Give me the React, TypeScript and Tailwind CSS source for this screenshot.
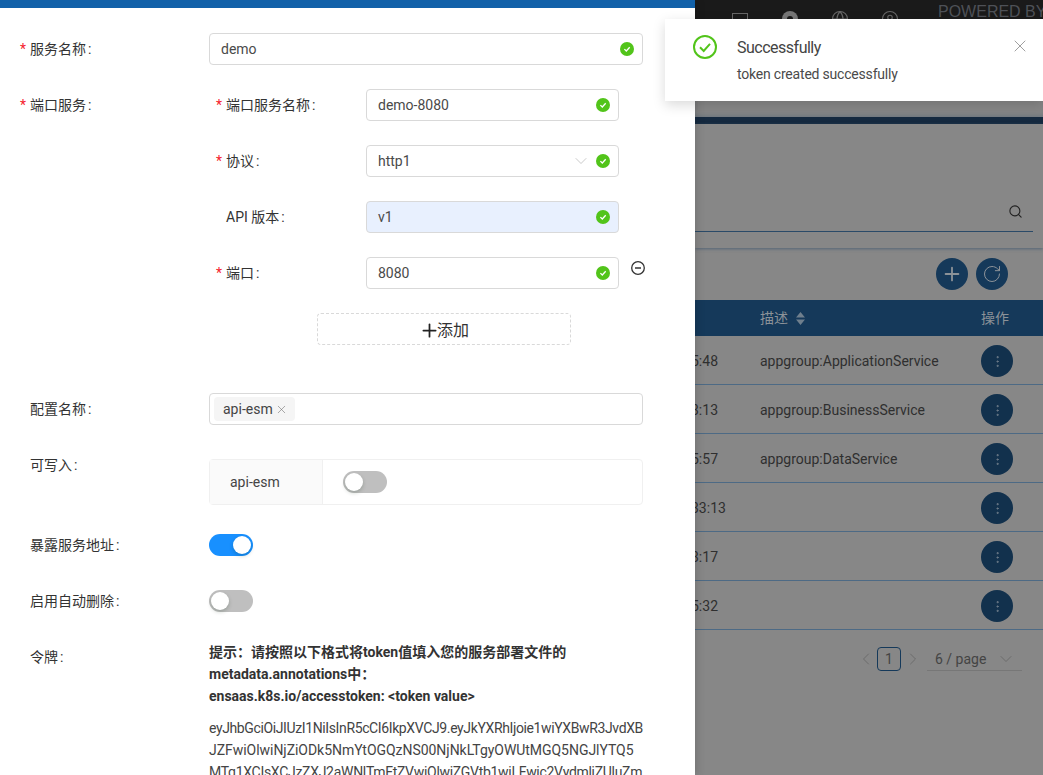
import { ReactNode } from "react";
import { ChevronDown, ChevronLeft, ChevronRight, CircleUser, EllipsisVertical, Globe, Plus, RotateCw, Search, X } from "lucide-react";

const tokenLines = [
  { text: "eyJhbGciOiJIUzI1NiIsInR5cCI6IkpXVCJ9.eyJkYXRhIjoie1wiYXBwR3JvdXB", tracking: "tracking-[-0.38px]" },
  { text: "JZFwiOlwiNjZiODk5NmYtOGQzNS00NjNkLTgyOWUtMGQ5NGJlYTQ5", tracking: "tracking-[-0.04px]" },
  { text: "MTg1XCIsXCJzZXJ2aWNlTmFtZVwiOlwiZGVtb1wiLFwic2VydmljZUluZm", tracking: "tracking-[-0.29px]" },
];

const tableRows = [
  { time: "5:48", desc: "appgroup:ApplicationService" },
  { time: "3:13", desc: "appgroup:BusinessService" },
  { time: "5:57", desc: "appgroup:DataService" },
  { time: "33:13", desc: "" },
  { time: "3:17", desc: "" },
  { time: "5:32", desc: "" },
];

function CheckBadge() {
  return (
    <svg width="14" height="14" viewBox="0 0 14 14" className="shrink-0">
      <circle cx="7" cy="7" r="7" fill="#52c41a" />
      <path d="M4.4 7.1 6.3 9 9.7 5.3" fill="none" stroke="#fff" strokeWidth="1.3" />
    </svg>
  );
}

function Field({ value, select, filled }: { value: string; select?: boolean; filled?: boolean }) {
  return (
    <div
      className={`flex h-8 w-full items-center rounded border border-[#d9d9d9] pl-[11px] pr-2 text-[#4a4a4a] ${
        filled ? "bg-[#e8f0fe]" : "bg-white"
      }`}
    >
      <span className="flex-1">{value}</span>
      {select ? <ChevronDown size={20} strokeWidth={1} className="mr-[5px] text-[#bfbfbf]" /> : null}
      <CheckBadge />
    </div>
  );
}

function Label({ text, required }: { text: string; required?: boolean }) {
  return (
    <div className="flex h-8 items-center text-[#333]">
      <span className="w-[10px] text-[#f5222d]">{required ? "*" : ""}</span>
      {text}
      <span className="ml-[2px]">:</span>
    </div>
  );
}

function Row({ label, required, children, className }: { label: string; required?: boolean; children: ReactNode; className?: string }) {
  return (
    <div className={`flex pl-5 ${className ?? "mb-6"}`}>
      <div className="w-[189px] shrink-0">
        <Label text={label} required={required} />
      </div>
      <div className="w-[434px]">{children}</div>
    </div>
  );
}

function SubRow({ label, required, children }: { label: string; required?: boolean; children: ReactNode }) {
  return (
    <div className="mb-6 flex pl-[7px]">
      <div className="w-[150px] shrink-0">
        <Label text={label} required={required} />
      </div>
      <div className="w-[253px]">{children}</div>
    </div>
  );
}

function Toggle({ on }: { on?: boolean }) {
  return (
    <div className={`flex h-[22px] w-11 items-center rounded-full px-[2px] ${on ? "justify-end bg-[#1890ff]" : "bg-[#bfbfbf]"}`}>
      <div className="h-[18px] w-[18px] rounded-full bg-white shadow-[0_2px_4px_rgba(0,35,11,0.2)]" />
    </div>
  );
}

function Drawer() {
  return (
    <div className="z-10 h-full w-[695px] shrink-0 overflow-hidden bg-white shadow-[2px_0_8px_rgba(0,0,0,0.15)]">
      <div className="h-2 bg-[#1261a9]" />
      <div className="pt-[25px]">
        <Row label="服务名称" required>
          <Field value="demo" />
        </Row>
        <Row label="端口服务" required className="mb-0">
          <SubRow label="端口服务名称" required>
            <Field value="demo-8080" />
          </SubRow>
          <SubRow label="协议" required>
            <Field value="http1" select />
          </SubRow>
          <SubRow label="API 版本">
            <Field value="v1" filled />
          </SubRow>
          <div className="relative">
            <SubRow label="端口" required>
              <Field value="8080" />
            </SubRow>
            <svg width="14" height="14" viewBox="0 0 14 14" fill="none" stroke="#333" className="absolute left-[422px] top-[4px]">
              <circle cx="7" cy="7" r="6.3" strokeWidth="1.3" />
              <path d="M4 7h6" strokeWidth="1.5" />
            </svg>
          </div>
          <div className="mb-12 ml-[108px] flex h-8 w-[254px] items-center justify-center rounded-sm border border-dashed border-[#d9d9d9] pt-[3px] text-base text-[#333]">
            <Plus size={21} strokeWidth={2} className="-mr-[3px] text-[#222]" />
            添加
          </div>
        </Row>
        <Row label="配置名称">
          <div className="flex h-8 items-center rounded border border-[#d9d9d9] px-1">
            <div className="flex h-6 w-[81px] items-center rounded-sm bg-[#f5f5f5] pl-[9px] text-[#444]">
              api-esm
              <X size={13} strokeWidth={1} className="ml-[2px] mt-px text-[#666]" />
            </div>
          </div>
        </Row>
        <Row label="可写入">
          <div className="mt-[10px] flex h-[46px] rounded-sm border border-[#f0f0f0]">
            <div className="flex w-[113px] items-center border-r border-[#f0f0f0] bg-[#fafafa] pl-5 text-[#444]">api-esm</div>
            <div className="flex items-center pl-5">
              <Toggle />
            </div>
          </div>
        </Row>
        <Row label="暴露服务地址">
          <div className="flex h-8 items-center">
            <Toggle on />
          </div>
        </Row>
        <Row label="启用自动删除">
          <div className="flex h-8 items-center">
            <Toggle />
          </div>
        </Row>
        <Row label="令牌" className="mb-0">
          <div className="font-bold leading-[22px] text-[#333]">
            <p>提示：请按照以下格式将token值填入您的服务部署文件的</p>
            <p>metadata.annotations中：</p>
            <p>ensaas.k8s.io/accesstoken: &lt;token value&gt;</p>
          </div>
          <div className="mt-[10px] leading-[22px] text-[#444]">
            {tokenLines.map((line) => (
              <p key={line.text} className={`whitespace-nowrap ${line.tracking}`}>
                {line.text}
              </p>
            ))}
          </div>
        </Row>
      </div>
    </div>
  );
}

function Backdrop() {
  return (
    <div className="flex h-full min-w-0 flex-1 flex-col overflow-hidden bg-[#878787] text-[#2f2f2f]">
      <div className="flex h-[60px] shrink-0 items-start bg-[#1a1a1a]">
        <div className="flex items-center gap-[34px] pl-[37px] pt-[11px] text-[#666]">
          <div className="h-3 w-4 border border-[#666]" />
          <div className="flex h-4 w-4 items-center justify-center rounded-full bg-[#777]">
            <div className="h-[6px] w-[6px] rounded-full bg-[#1a1a1a]" />
          </div>
          <div className="flex h-4 w-4 items-center justify-center">
            <Globe size={18} strokeWidth={1.5} className="shrink-0" />
          </div>
          <div className="flex h-4 w-4 items-center justify-center">
            <CircleUser size={18} strokeWidth={1.5} className="shrink-0" />
          </div>
        </div>
        <span className="ml-[40px] whitespace-nowrap pt-[2px] text-base leading-5 text-[#4e5157] [font-family:'Liberation_Sans',sans-serif]">POWERED BY</span>
      </div>
      <div className="h-[57px] shrink-0 shadow-[inset_0_-4px_4px_-2px_rgba(90,105,120,0.5)]" />
      <div className="h-[7px] shrink-0 bg-[#15293f]" />
      <div className="h-[124px] shrink-0 shadow-[0_1px_3px_rgba(60,85,110,0.7)]">
        <div className="mr-[10px] mt-[70px] flex h-[38px] items-center justify-end border-b border-[#2a4a68] pb-[3px] pr-[10px]">
          <Search size={15} strokeWidth={1.8} className="text-[#222]" />
        </div>
      </div>
      <div className="flex h-[52px] shrink-0 items-start justify-end gap-2 pr-[35px] pt-[10px]">
        <div className="flex h-8 w-8 items-center justify-center rounded-full bg-[#15395a] text-[#8c9298]">
          <Plus size={22} strokeWidth={2} />
        </div>
        <div className="flex h-8 w-8 items-center justify-center rounded-full bg-[#15395a] text-[#8c9298]">
          <RotateCw size={20} strokeWidth={1.2} />
        </div>
      </div>
      <div className="grid h-9 shrink-0 grid-cols-[65px_221px_62px] items-center bg-[#15395a] text-[#8c9298]">
        <div />
        <div className="flex items-center gap-2">
          描述
          <svg width="9" height="13" viewBox="0 0 9 13" fill="#6f7f8d">
            <path d="M4.5 0 9 5.5H0ZM0 7.5h9L4.5 13Z" />
          </svg>
        </div>
        <div>操作</div>
      </div>
      {tableRows.map((row) => (
        <div key={row.time} className="grid h-[49px] shrink-0 grid-cols-[65px_221px_62px] items-center border-b border-[#4d6a85] pt-[2px]">
          <div className="-ml-[4px] whitespace-nowrap">{row.time}</div>
          <div>{row.desc}</div>
          <div className="flex h-8 w-8 items-center justify-center rounded-full bg-[#12314d] text-[#7f8a94]">
            <EllipsisVertical size={15} strokeWidth={1.2} />
          </div>
        </div>
      ))}
      <div className="flex items-center pl-[161px] pt-[17px] text-[#444]">
        <ChevronLeft size={20} strokeWidth={1} className="text-[#666]" />
        <div className="ml-px flex h-6 w-6 items-center justify-center rounded-sm border border-[#15395a]">1</div>
        <ChevronRight size={20} strokeWidth={1} className="ml-[2px] text-[#666]" />
        <div className="ml-1 flex h-6 w-[95px] items-center border-b border-[#777] pl-2">
          6 / page
          <ChevronDown size={20} strokeWidth={1} className="ml-[10px] text-[#666]" />
        </div>
      </div>
    </div>
  );
}

export default function App() {
  return (
    <div className="relative flex h-[775px] w-[1043px] overflow-hidden text-sm [font-family:Roboto,'Noto_Sans_CJK_SC',sans-serif]">
      <Drawer />
      <Backdrop />
      <div className="absolute left-[665px] top-[19px] z-20 flex h-[82px] w-[378px] bg-white pl-7 pt-4 shadow-[0_4px_12px_rgba(0,0,0,0.15)]">
        <svg width="24" height="24" viewBox="0 0 24 24" fill="none" stroke="#52c41a" className="shrink-0">
          <circle cx="12" cy="12" r="11" strokeWidth="2" />
          <path d="M7 12.3 10.7 16 17 8.8" strokeWidth="2" />
        </svg>
        <div className="ml-5 flex-1">
          <p className="pt-px text-base leading-6 tracking-[-0.5px] text-[#444]">Successfully</p>
          <p className="mt-[4px] tracking-[-0.2px] text-[#4a4a4a]">token created successfully</p>
        </div>
        <X size={20} strokeWidth={1} className="mr-[13px] mt-px text-[#8c8c8c]" />
      </div>
    </div>
  );
}
